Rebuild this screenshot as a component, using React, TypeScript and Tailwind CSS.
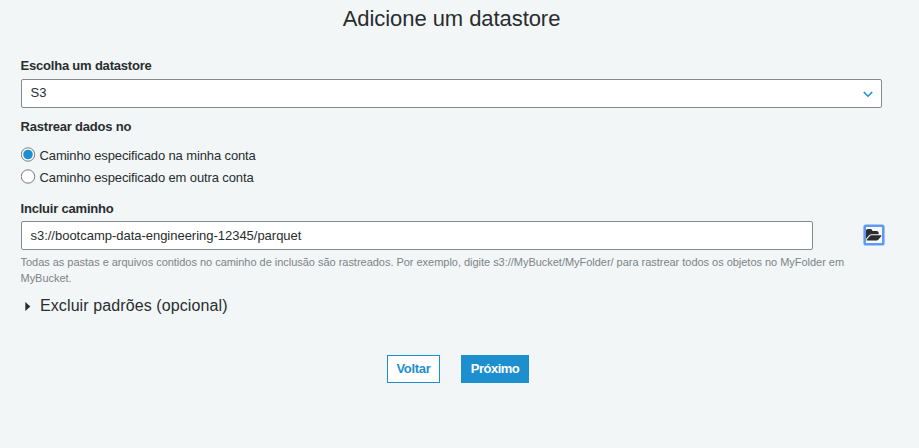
const sans = "font-['Liberation_Sans',Arial,sans-serif]";

function Label({ children }: { children: string }) {
  return <div className="-ml-[0.5px] h-4 whitespace-nowrap text-[13px] leading-4 font-bold tracking-[-0.2px]">{children}</div>;
}

function Radio({ checked, children }: { checked?: boolean; children: string }) {
  return (
    <label className="flex h-[22px] items-center">
      <svg className="mr-1 mb-[3px] size-[15px] shrink-0" viewBox="0 0 15 15" role="radio" aria-checked={!!checked}>
        <circle cx="7" cy="7.5" r="6.7" fill="#fff" stroke="#747b7e" strokeWidth="1" />
        {checked && <circle cx="7" cy="7.5" r="4.8" fill="#1e8fce" />}
      </svg>
      <span className="-ml-[0.5px] whitespace-nowrap text-[13px] leading-4 tracking-[-0.12px]">{children}</span>
    </label>
  );
}

function FolderOpenIcon() {
  return (
    <svg className="h-[11.5px] w-[15.5px] shrink-0" viewBox="0 128 1879 1408" fill="#292d2e" preserveAspectRatio="none">
      <path d="M1879 952q0 31-31 66l-336 396q-43 51-120.5 86.5t-143.5 35.5h-1088q-34 0-60.5-13t-26.5-43q0-31 31-66l336-396q43-51 120.5-86.5t143.5-35.5h1088q34 0 60.5 13t26.5 43zM1536 608v160h-832q-94 0-197 47.5t-164 119.5l-337 396-5 6q0-4-.5-12.5t-.5-12.5v-960q0-92 66-158t158-66h320q92 0 158 66t66 158v32h544q92 0 158 66t66 158z" />
    </svg>
  );
}

export default function App() {
  return (
    <main className={`${sans} h-[448px] w-[919px] overflow-hidden bg-[#f2f6f7] pl-[21px] text-[#292d2e]`}>
      <h1 className="-ml-[21px] flex h-[38px] w-[903px] items-center justify-center text-[22px] leading-[38px] tracking-[-0.06px]">
        <span className="whitespace-nowrap">Adicione um datastore</span>
      </h1>

      <section className="pt-5">
        <Label>Escolha um datastore</Label>
        <div className="mt-[5px] flex h-[29px] w-[861px] items-center justify-between rounded-[2px] border border-[#858b8d] bg-white pr-[8.5px] pl-[8.5px]">
          <span className="mb-px text-[13px] leading-4">S3</span>
          <svg className="size-[10px]" viewBox="0 0 10 10" fill="none" stroke="#1e8fce" strokeWidth="1.6">
            <path d="M.8 3 5 7.200l4.200-4.200" />
          </svg>
        </div>
      </section>

      <section className="pt-[11px]">
        <Label>Rastrear dados no</Label>
        <div className="pt-[10px]">
          <Radio checked>Caminho especificado na minha conta</Radio>
          <Radio>Caminho especificado em outra conta</Radio>
        </div>
      </section>

      <section className="pt-3">
        <Label>Incluir caminho</Label>
        <div className="mt-1 flex items-center">
          <div className="flex h-[29px] w-[792px] items-center rounded-[2px] border border-[#858b8d] bg-white px-[8.5px]">
            <span className="whitespace-nowrap text-[13px] leading-4 tracking-[-0.02px]">s3://bootcamp-data-engineering-12345/parquet</span>
          </div>
          <button aria-label="Procurar pasta" className="mb-px ml-[51px] flex size-[20px] items-center justify-center rounded-[2px] border-2 border-[#609af5] bg-[#f7f9fb] shadow-[0_0_0_0.6px_#609af5]">
            <FolderOpenIcon />
          </button>
        </div>
        <p className="mt-1 -ml-[0.5px] text-[11px] leading-4 tracking-[-0.026px] whitespace-nowrap text-[#7c8486]">
          <span>Todas as pastas e arquivos contidos no caminho de inclusão são rastreados. Por exemplo, digite s3://MyBucket/MyFolder/ para rastrear todos os objetos no MyFolder em</span>
          <br />
          MyBucket.
        </p>
      </section>

      <div className="mt-2 flex h-6 items-center">
        <svg className="mr-[9px] ml-1 h-[9px] w-[6px]" viewBox="0 0 6 9" fill="#292d2e"><path d="M.3 0 5.300 4.500 .3 9Z" /></svg>
        <span className="whitespace-nowrap text-base leading-6 tracking-[0.1px]">Excluir padrões (opcional)</span>
      </div>

      <div className="mt-[37px] ml-[366px] flex gap-[21px] text-[13px] font-bold">
        <button className="flex h-[28px] w-[53px] items-center justify-center border border-[#1e8fce] bg-white tracking-[-0.3px] text-[#1e8fce]">Voltar</button>
        <button className="flex h-[28px] w-[68px] items-center justify-center bg-[#1e8fce] tracking-[-0.5px] text-white">Próximo</button>
      </div>
    </main>
  );
}
